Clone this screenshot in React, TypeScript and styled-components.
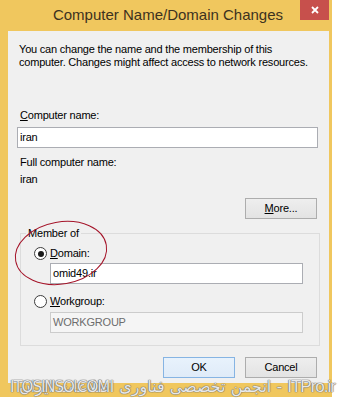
import React from 'react';
import styled, { createGlobalStyle } from 'styled-components';

const GlobalStyle = createGlobalStyle`
  html, body {
    margin: 0;
    padding: 0;
    background: #ffffff;
  }
  body {
    font-family: "Liberation Sans", Arial, sans-serif;
  }
`;

const Page = styled.div`
  width: 343px;
  height: 407px;
  background: #ffffff;
`;

const Window = styled.div`
  position: relative;
  width: 332px;
  height: 397px;
  box-sizing: border-box;
  background: #f0c75e;
  padding: 0 3px 14px 8px;
  display: flex;
  flex-direction: column;
`;

const TitleBar = styled.div`
  height: 31px;
  margin-left: -8px;
  display: grid;
  grid-template-columns: 32px 1fr 29px;
  align-items: start;
`;

const Title = styled.div`
  grid-column: 2;
  padding-top: 6px;
  padding-left: 4px;
  text-align: center;
  font-size: 15px;
  line-height: 18px;
  color: #3d3220;
  white-space: nowrap;
`;

const CloseButton = styled.div`
  grid-column: 3;
  width: 29px;
  height: 20px;
  background: #c7504c;
  display: flex;
  align-items: center;
  justify-content: center;
`;

const Client = styled.div`
  flex: 1;
  background: #f0f0f0;
  padding: 12px 10px 5px 9px;
  display: flex;
  flex-direction: column;
  font-size: 11px;
  line-height: 13px;
  letter-spacing: -0.2px;
  color: #000000;
`;

const Description = styled.p`
  margin: 0 0 0 2px;
`;

const Label = styled.div<{ $top: number }>`
  margin: ${(p) => p.$top}px 0 0 3px;
`;

const Mnemonic = styled.span`
  text-decoration: underline;
`;

const TextBox = styled.div<{ $top: number; $width: number; $disabled?: boolean }>`
  margin-top: ${(p) => p.$top}px;
  width: ${(p) => p.$width}px;
  height: 21px;
  box-sizing: border-box;
  border: 1px solid ${(p) => (p.$disabled ? '#cccccc' : '#abadb3')};
  background: ${(p) => (p.$disabled ? '#f5f5f5' : '#ffffff')};
  color: ${(p) => (p.$disabled ? '#6d6d6d' : '#000000')};
  padding: 0 2px;
  display: flex;
  align-items: center;
`;

const ButtonRow = styled.div<{ $top: string }>`
  margin-top: ${(p) => p.$top};
  width: 301px;
  display: flex;
  justify-content: flex-end;
  gap: 9px;
`;

const Button = styled.div<{ $default?: boolean }>`
  width: 72px;
  height: 21px;
  box-sizing: border-box;
  border: 1px solid ${(p) => (p.$default ? '#86b4e3' : '#adadad')};
  background: ${(p) =>
    p.$default
      ? 'linear-gradient(#e8f2fc, #dfebf8)'
      : 'linear-gradient(#eeeeee, #e3e3e3)'};
  display: flex;
  align-items: center;
  justify-content: center;
  margin-right: 1px;
`;

const Group = styled.fieldset`
  margin: 8px 0 0 3px;
  width: 300px;
  box-sizing: border-box;
  border: 1px solid #dcdcdc;
  padding: 7px 0 12px 13px;
  min-width: 0;
`;

const Legend = styled.legend`
  margin-left: -8px;
  padding: 0 2px;
  line-height: 13px;
`;

const RadioRow = styled.div<{ $top: number }>`
  margin-top: ${(p) => p.$top}px;
  height: 13px;
  display: flex;
  align-items: center;
  gap: 3px;
`;

const RadioCircle = styled.span<{ $checked?: boolean }>`
  width: 13px;
  height: 13px;
  box-sizing: border-box;
  border-radius: 50%;
  border: 1px solid #3c3c3c;
  background: #ffffff;
  display: flex;
  align-items: center;
  justify-content: center;
  &::after {
    content: '';
    width: 6px;
    height: 6px;
    border-radius: 50%;
    background: ${(p) => (p.$checked ? '#1a1a1a' : 'transparent')};
  }
`;

const Indented = styled.div`
  margin-left: 16px;
`;

const Annotation = styled.svg`
  position: absolute;
  left: 0;
  top: 0;
  pointer-events: none;
`;

const Watermark = styled.div`
  position: absolute;
  right: -3px;
  bottom: 1px;
  font-family: "DejaVu Sans", sans-serif;
  font-size: 16px;
  line-height: 18px;
  color: rgba(255, 255, 255, 0.85);
  text-shadow: 0 0 1px #6e6e6e, 0 0 1px #6e6e6e, 0 0 1px #6e6e6e;
  white-space: nowrap;
`;

const WatermarkLatin = styled.span`
  font-family: "Liberation Sans", Arial, sans-serif;
  font-size: 17px;
  letter-spacing: -1px;
`;

const WatermarkSite = styled(Watermark)`
  right: auto;
  left: 10px;
  font-size: 15px;
  letter-spacing: -1px;
`;

export default function App() {
  return (
    <Page>
      <GlobalStyle />
      <Window>
        <TitleBar>
          <Title>Computer Name/Domain Changes</Title>
          <CloseButton>
            <svg width="8" height="8" viewBox="0 0 8 8">
              <path d="M1 1 L7 7 M7 1 L1 7" stroke="#ffffff" strokeWidth="1.8" />
            </svg>
          </CloseButton>
        </TitleBar>
        <Client>
          <Description>
            You can change the name and the membership of this
            <br />
            computer. Changes might affect access to network resources.
          </Description>
          <Label $top={40}>
            <Mnemonic>C</Mnemonic>omputer name:
          </Label>
          <TextBox $top={5} $width={301}>iran</TextBox>
          <Label $top={8}>Full computer name:</Label>
          <Label $top={4}>iran</Label>
          <ButtonRow $top="12px">
            <Button>
              <span>
                <Mnemonic>M</Mnemonic>ore...
              </span>
            </Button>
          </ButtonRow>
          <Group>
            <Legend>Member of</Legend>
            <RadioRow $top={0}>
              <RadioCircle $checked />
              <span>
                <Mnemonic>D</Mnemonic>omain:
              </span>
            </RadioRow>
            <Indented>
              <TextBox $top={3} $width={253}>omid49.ir</TextBox>
            </Indented>
            <RadioRow $top={11}>
              <RadioCircle />
              <span>
                <Mnemonic>W</Mnemonic>orkgroup:
              </span>
            </RadioRow>
            <Indented>
              <TextBox $top={4} $width={253} $disabled>WORKGROUP</TextBox>
            </Indented>
          </Group>
          <ButtonRow $top="auto">
            <Button $default>OK</Button>
            <Button>Cancel</Button>
          </ButtonRow>
        </Client>
        <Annotation width="332" height="397">
          <ellipse
            cx="61"
            cy="253"
            rx="46"
            ry="31"
            transform="rotate(-10 61 253)"
            fill="none"
            stroke="#a5152a"
            strokeWidth="1"
          />
        </Annotation>
        <Watermark dir="rtl">
          <WatermarkLatin>ITPro.ir</WatermarkLatin> - انجمن تخصصی فناوری اطلاعات ایران
        </Watermark>
        <WatermarkSite>ITOSINSO.COM</WatermarkSite>
      </Window>
    </Page>
  );
}
